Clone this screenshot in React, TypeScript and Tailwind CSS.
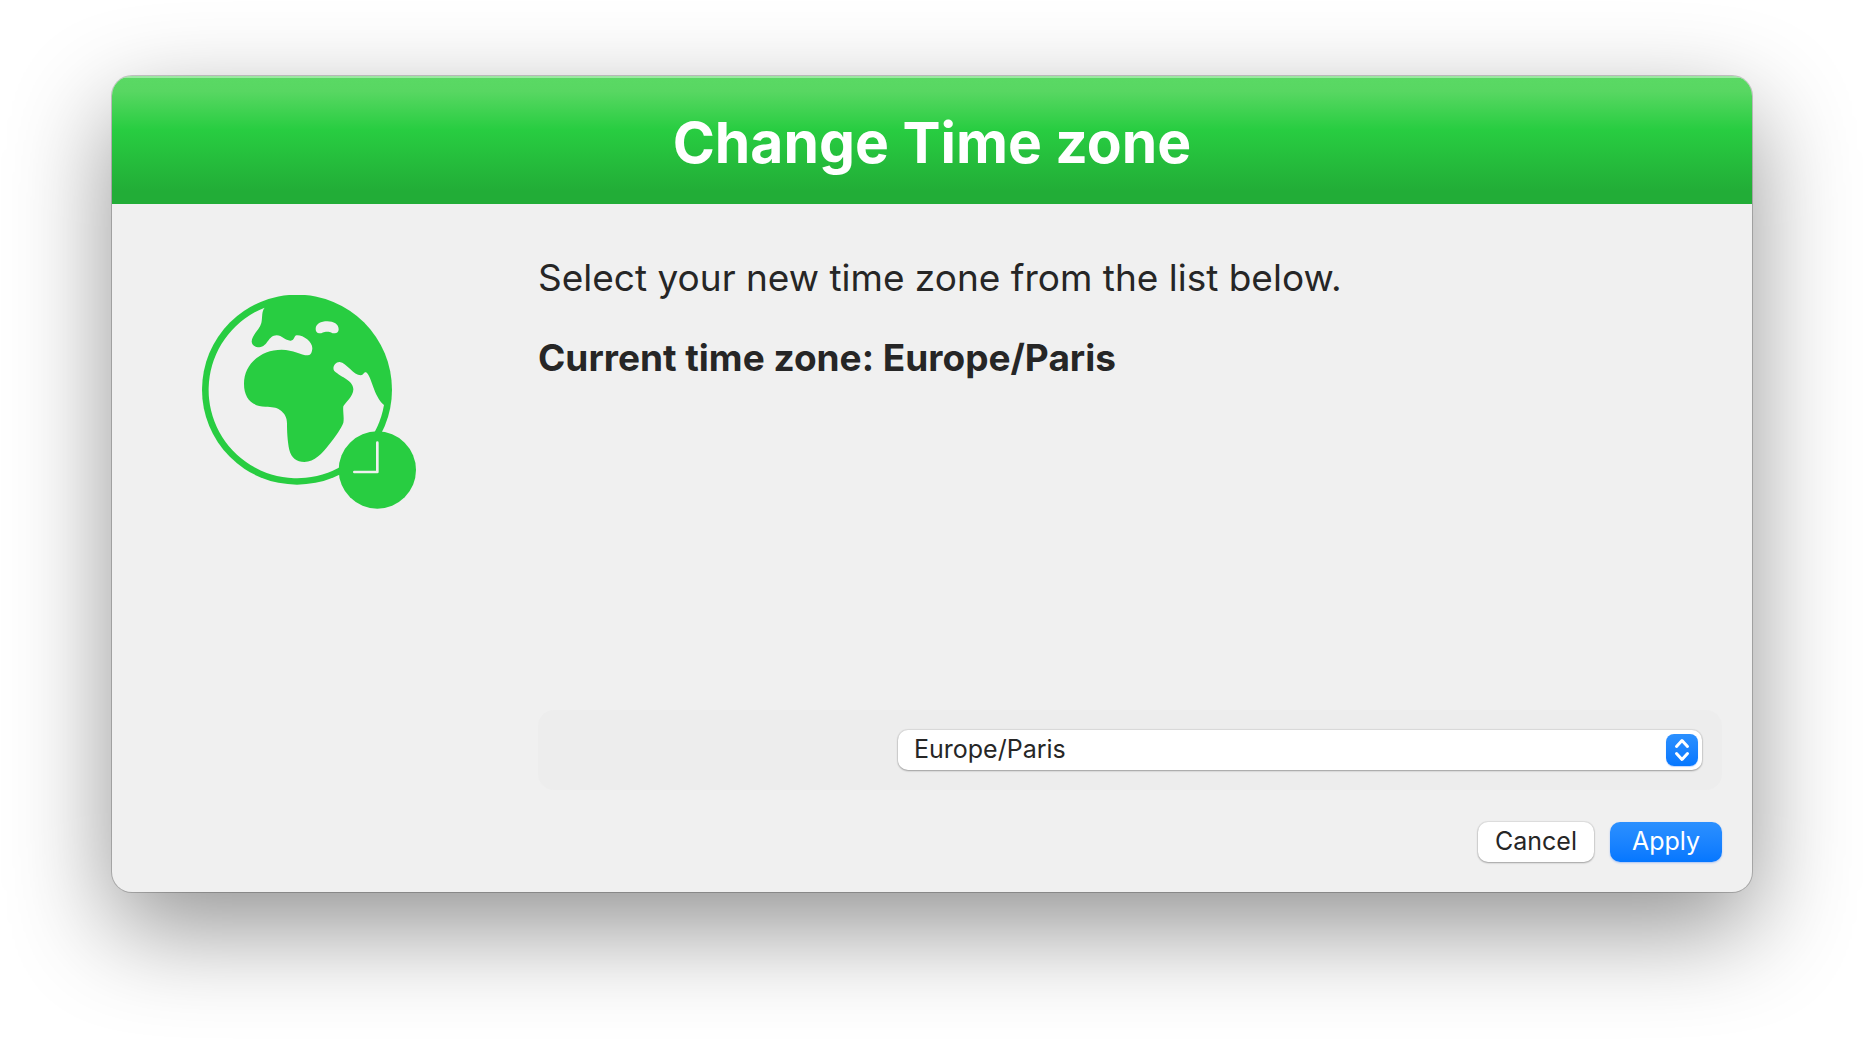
import { useState } from "react";

const ZONES = [
  "Europe/Paris",
  "Europe/London",
  "Europe/Berlin",
  "America/New_York",
  "Asia/Tokyo",
];

function GlobeClockIcon() {
  return (
    <svg viewBox="36 44 642 642" className="size-[214px]" role="img" aria-label="Time zone">
      <circle cx="321" cy="328" r="285" fill="#28cd41" />
      <path
        fill="#f0f0f0"
        d="M224 82
           C214 93 218 111 214 128 C209 148 185 164 185 184
           C186 195 196 201 208 201 C234 199 234 165 260 165
           C276 165 287 182 302 181 C315 180 311 166 320 165
           C340 164 367 184 367 204 C366 216 363 225 354 225
           C331 225 311 208 275 208
           C212 208 162 252 162 310 C162 354 186 378 226 379
           C246 380 258 380 270 389 C284 399 291 411 291 430
           C291 450 292 482 298 509 C304 533 320 545 343 545
           C374 545 396 520 418 492 C438 466 454 444 460 427
           C463 410 458 390 460 378 C465 367 491 347 490 326
           C489 300 455 292 433 272 C425 262 436 244 449 245
           C470 248 491 285 512 285 C521 284 521 275 528 276
           C545 286 550 348 582 374
           A265 265 0 1 1 224 82 Z"
      />
      <path
        fill="#f0f0f0"
        d="M377 146 C377 130 393 123 412 123 C431 123 446 131 446 147 C446 155 441 159 434 159 C425 159 423 154 412 154 C400 154 396 159 388 159 C381 159 377 153 377 146 Z"
      />
      <circle cx="562" cy="569" r="116" fill="#28cd41" />
      <path
        d="M562 487 V575 H493"
        fill="none"
        stroke="#f0f0f0"
        strokeWidth="8"
        strokeLinecap="round"
        strokeLinejoin="round"
      />
    </svg>
  );
}

export default function App() {
  const [zone, setZone] = useState("Europe/Paris");

  return (
    <div className="flex min-h-screen flex-col overflow-hidden bg-white px-28 pt-19 pb-37 font-['Inter','Noto_Sans',sans-serif] text-[#262626]">
      <main className="flex flex-1 flex-col overflow-hidden rounded-[20px] bg-[#f0f0f0] shadow-[0_0_0_1px_rgba(0,0,0,0.2),0_36px_100px_rgba(0,0,0,0.43)]">
        <header className="flex h-32 items-center justify-center bg-[linear-gradient(to_bottom,#5ad964_0%,#58d762_12%,#28cd41_42%,#22ad37_90%)] pt-1 shadow-[inset_0_2px_0_rgba(255,255,255,0.4)]">
          <h1 className="text-[57px] leading-none font-bold text-white">Change Time zone</h1>
        </header>

        <form className="flex flex-1" onSubmit={(e) => e.preventDefault()}>
          <div className="w-[426px] shrink-0 pt-[91px] pl-[90px]">
            <GlobeClockIcon />
          </div>

          <div className="flex flex-1 flex-col pt-[50px] pr-[30px] pb-[30px]">
            <p className="text-[37px] leading-12">Select your new time zone from the list below.</p>
            <p className="mt-8 text-[37px] leading-12 font-bold">Current time zone: {zone}</p>

            <div className="mt-auto flex justify-end rounded-2xl bg-[#ededed] p-5">
              <div className="relative w-[804px]">
                <select
                  aria-label="Time zone"
                  value={zone}
                  onChange={(e) => setZone(e.target.value)}
                  className="block h-10 w-full appearance-none rounded-[10px] bg-white pr-12 pb-0.5 pl-4 text-[25px] leading-9 shadow-[0_0_1px_1px_rgba(0,0,0,0.08),0_1px_2px_rgba(0,0,0,0.28)]"
                >
                  {ZONES.map((z) => (
                    <option key={z}>{z}</option>
                  ))}
                </select>
                <span className="pointer-events-none absolute top-1 right-1 flex size-8 items-center justify-center rounded-lg bg-linear-to-b from-[#2b90ff] to-[#0577ff] shadow-[0_1px_1px_rgba(0,90,255,0.25)]">
                  <svg
                    viewBox="0 0 32 32"
                    className="size-8"
                    fill="none"
                    stroke="white"
                    strokeWidth="3"
                    strokeLinecap="round"
                    strokeLinejoin="round"
                    aria-hidden="true"
                  >
                    <path d="M10.5 12.5 L16 6.5 L21.5 12.5 M10.5 19.5 L16 25.5 L21.5 19.5" />
                  </svg>
                </span>
              </div>
            </div>

            <div className="mt-8 flex justify-end gap-4">
              <button
                type="button"
                className="h-10 w-29 rounded-[10px] bg-white pb-0.5 text-[25px] leading-9 shadow-[0_0_1px_1px_rgba(0,0,0,0.08),0_1px_2px_rgba(0,0,0,0.28)]"
              >
                Cancel
              </button>
              <button
                type="submit"
                className="h-10 w-28 rounded-[10px] bg-linear-to-b from-[#2b90ff] to-[#0577ff] pb-0.5 text-[25px] leading-9 text-white shadow-[0_1px_2px_rgba(0,90,255,0.3)]"
              >
                Apply
              </button>
            </div>
          </div>
        </form>
      </main>
    </div>
  );
}
